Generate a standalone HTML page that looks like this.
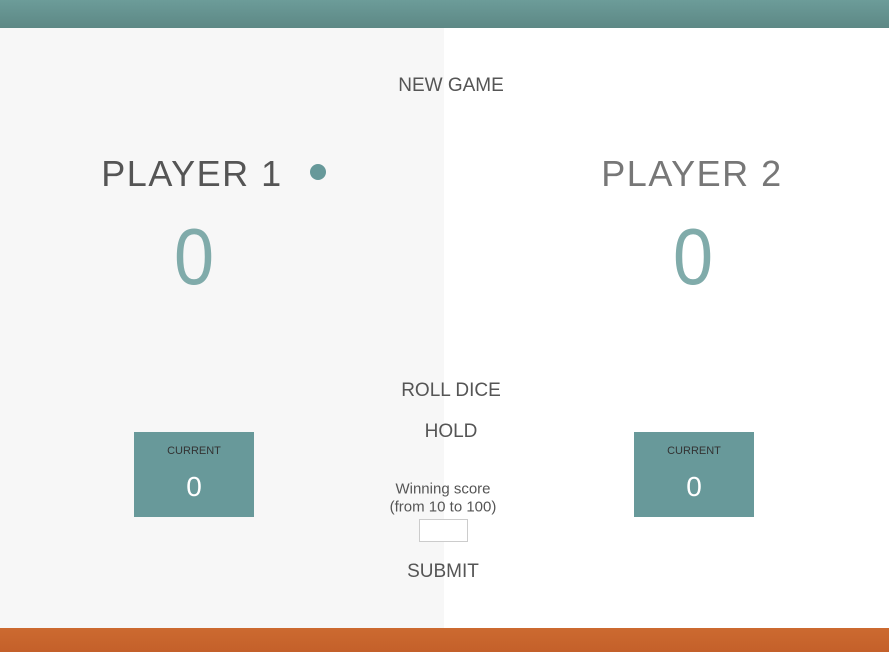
<!DOCTYPE html>
<html><head><style>
body{margin:0;width:889px;height:652px;position:relative;overflow:hidden;font-family:"Liberation Sans",sans-serif;background:#fff}
.a{position:absolute;white-space:nowrap;transform:translate(-50%,-50%)}
.top{position:absolute;left:0;top:0;width:889px;height:28px;background:linear-gradient(#6c9c99,#5d8885)}
.bot{position:absolute;left:0;top:628px;width:889px;height:24px;background:linear-gradient(#cc6a30,#c4602a)}
.left{position:absolute;left:0;top:28px;width:444px;height:600px;background:#f7f7f7}
.p{font-size:36px;letter-spacing:1.5px;color:#555;font-weight:normal}
.s{font-size:80px;color:#80abaa;transform:translate(-50%,-50%) scaleX(.9);font-weight:normal}
.btn{font-size:19px;color:#555}
.cur{position:absolute;top:432px;width:120px;height:85px;background:#68999a;color:#fff;text-align:center}
.cur .l{font-size:11px;color:#333;margin-top:13px}
.cur .v{font-size:28px;margin-top:14px}
</style></head><body>
<div class="top"></div>
<div class="left"></div>
<div class="bot"></div>
<div class="a btn" style="left:451px;top:86px">NEW GAME</div>
<div class="a p" style="left:192px;top:174px">PLAYER 1</div>
<div style="position:absolute;left:310px;top:164px;width:16px;height:16px;border-radius:50%;background:#67999a"></div>
<div class="a p" style="left:692px;top:174px;color:#777">PLAYER 2</div>
<div class="a s" style="left:194px;top:257px">0</div>
<div class="a s" style="left:693px;top:257px">0</div>
<div class="a btn" style="left:451px;top:391px">ROLL DICE</div>
<div class="a btn" style="left:451px;top:432px">HOLD</div>
<div class="cur" style="left:134px"><div class="l">CURRENT</div><div class="v">0</div></div>
<div class="cur" style="left:634px"><div class="l">CURRENT</div><div class="v">0</div></div>
<div class="a" style="left:443px;top:489px;font-size:15px;color:#555">Winning score</div>
<div class="a" style="left:443px;top:507px;font-size:15px;color:#555">(from 10 to 100)</div>
<div style="position:absolute;left:419px;top:519px;width:47px;height:21px;border:1px solid #ccc;background:#fff"></div>
<div class="a btn" style="left:443px;top:572px">SUBMIT</div>
</body></html>
